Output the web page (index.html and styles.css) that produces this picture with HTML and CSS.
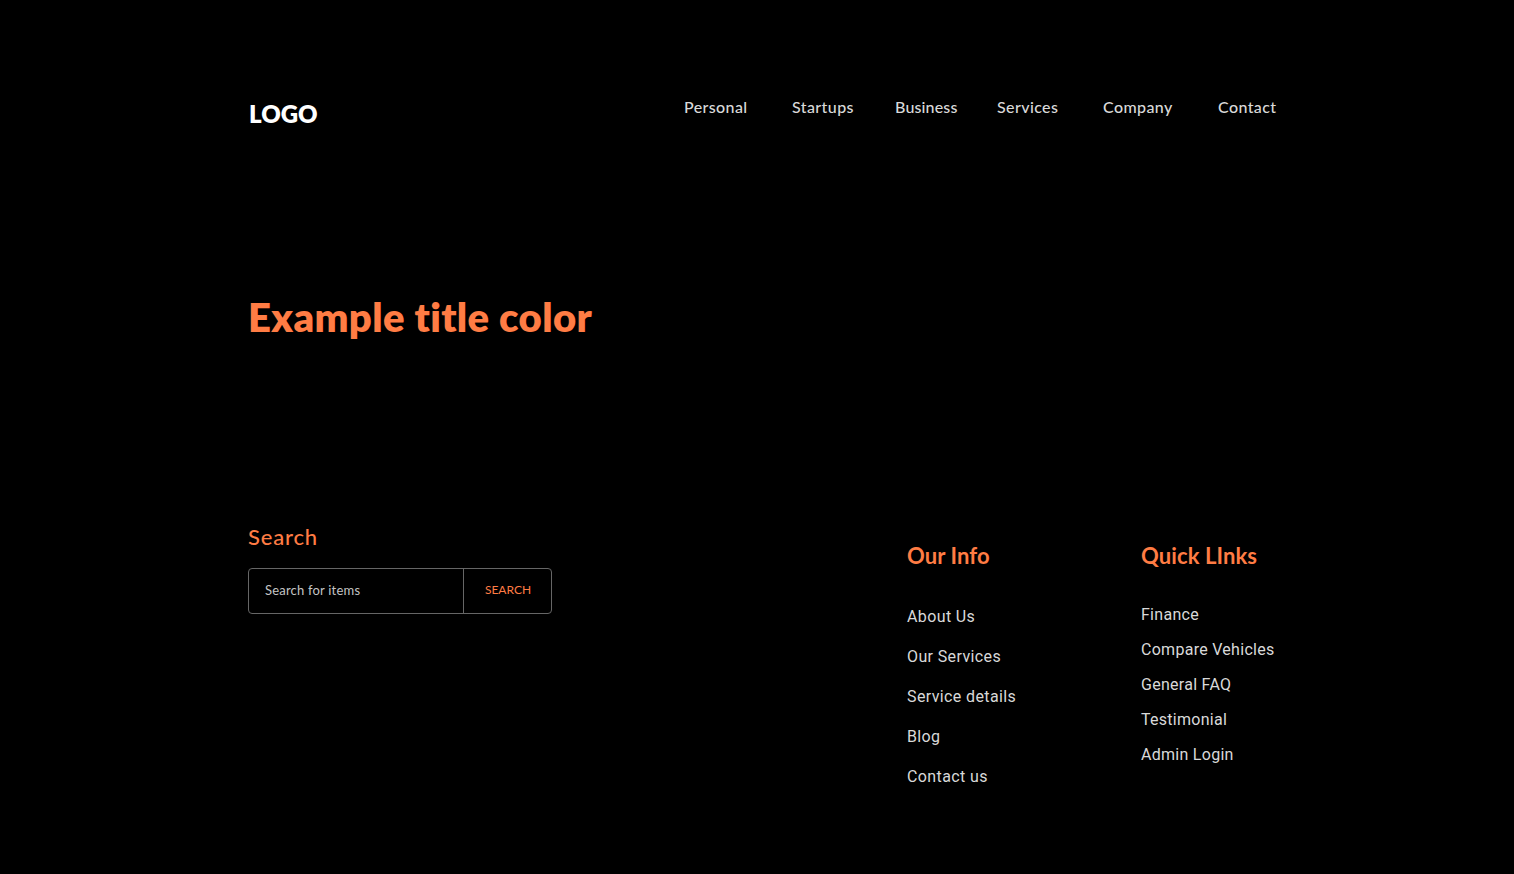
FILE: index.html
```
<!DOCTYPE html>
<html lang="en">
<head>
<meta charset="utf-8">
<title>Example title color</title>
<link rel="stylesheet" href="styles.css">
</head>
<body>
<header class="header">
  <a class="logo">LOGO</a>
  <nav class="nav">
    <a>Personal</a>
    <a>Startups</a>
    <a class="tight">Business</a>
    <a>Services</a>
    <a>Company</a>
    <a>Contact</a>
  </nav>
</header>
<main>
  <h1 class="title">Example title color</h1>
</main>
<footer class="footer">
  <section class="search">
    <h2 class="search-title">Search</h2>
    <form class="search-box">
      <span class="search-field">Search for items</span>
      <span class="search-button">SEARCH</span>
    </form>
  </section>
  <section class="column">
    <h2 class="column-title">Our Info</h2>
    <ul class="links links-wide">
      <li>About Us</li>
      <li>Our Services</li>
      <li>Service details</li>
      <li>Blog</li>
      <li>Contact us</li>
    </ul>
  </section>
  <section class="column">
    <h2 class="column-title">Quick LInks</h2>
    <ul class="links">
      <li>Finance</li>
      <li>Compare Vehicles</li>
      <li>General FAQ</li>
      <li>Testimonial</li>
      <li>Admin Login</li>
    </ul>
  </section>
</footer>
</body>
</html>
```
FILE: styles.css
```
* { box-sizing: border-box; }
body {
  margin: 0;
  height: 874px;
  padding: 95px 230px 0 248px;
  background: #000;
  color: #d9d9d9;
  font-family: Lato, sans-serif;
  font-variant-ligatures: none;
  overflow: hidden;
  white-space: nowrap;
}
h1, h2, ul { margin: 0; padding: 0; font-weight: inherit; }
.header { display: flex; justify-content: space-between; height: 196px; }
.logo { padding: 4px 0 0 1px; font-size: 24px; line-height: 30px; font-weight: 800; letter-spacing: 0; color: #fff; }
.nav {
  display: grid;
  grid-template-columns: 108px 103px 102px 106px 115px 66px;
  font-size: 16px;
  line-height: 24px;
  font-weight: 500;
  letter-spacing: 0.4px;
}
.tight { letter-spacing: 0.15px; }
.title { font-size: 40px; line-height: 52px; font-weight: 800; letter-spacing: 0.35px; color: #ff7c44; }
.footer {
  display: grid;
  grid-template-columns: 659px 234px 143px;
  padding-top: 180px;
}
.search-title { font-size: 22px; line-height: 28px; font-weight: 500; letter-spacing: 0.8px; color: #ff7c44; }
.search-box {
  display: flex;
  width: 304px;
  height: 46px;
  margin-top: 17px;
  border: 1px solid #666;
  border-radius: 4px;
}
.search-field { width: 214px; padding-left: 16px; font-size: 13px; line-height: 43px; letter-spacing: 0.2px; color: #c4c4c4; }
.search-button { flex: 1; padding-left: 1px; border-left: 1px solid #666; text-align: center; font-size: 12px; line-height: 42px; color: #ff7c44; }
.column { padding-top: 19px; }
.column-title { font-size: 22px; line-height: 28px; font-weight: 700; letter-spacing: 0.1px; color: #ff7c44; }
.links { list-style: none; margin-top: 27px; font-family: Roboto, sans-serif; font-size: 16px; line-height: 35px; letter-spacing: 0.28px; }
.links-wide { line-height: 40px; letter-spacing: 0.38px; }
```
